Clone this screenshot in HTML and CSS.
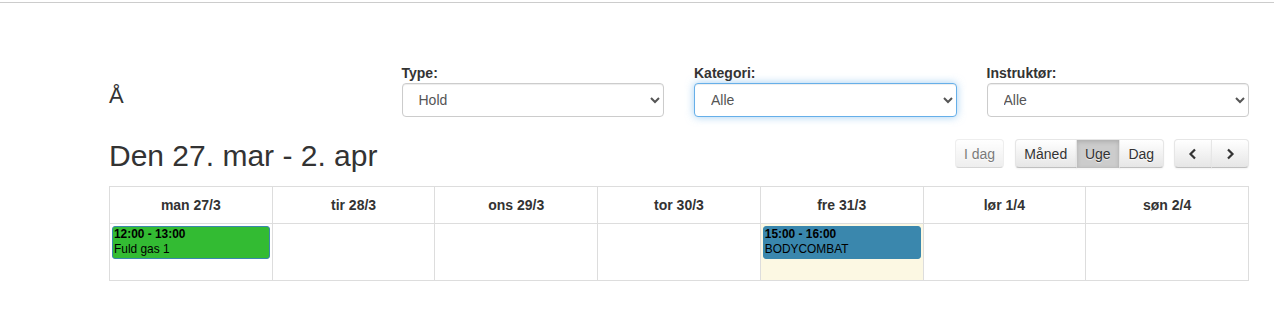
FILE: index.html
```html
<!DOCTYPE html>
<html>
  <head>
    <meta charset="utf-8">
    <title>Holdplan</title>
    <link rel="stylesheet" href="styles.css">
  </head>

<body>
  <div class = "top-line"></div>

  <div class = "page">
    <div class = "filters">
      <div class = "filter-title">Å</div>

      <div class = "form-group">
        <label class = "form-label">Type:</label>
        <select class = "form-control">
          <option>Hold</option>
        </select>
      </div>

      <div class = "form-group">
        <label class = "form-label">Kategori:</label>
        <select class = "form-control is-focus">
          <option>Alle</option>
        </select>
      </div>

      <div class = "form-group">
        <label class = "form-label">Instruktør:</label>
        <select class = "form-control">
          <option>Alle</option>
        </select>
      </div>
    </div>

    <div class = "toolbar">
      <h2 class = "range-title">Den 27. mar - 2. apr</h2>

      <div class = "toolbar-right">
        <button class = "fc-button is-single is-disabled">I dag</button>

        <div class = "btn-group">
          <button class = "fc-button">Måned</button>
          <button class = "fc-button is-active">Uge</button>
          <button class = "fc-button">Dag</button>
        </div>

        <div class = "btn-group">
          <button class = "fc-button arrow-button">
            <svg width="10" height="12" viewBox="0 0 10 12"><polyline points="7,1.5 2.5,6 7,10.5" fill="none" stroke="#333" stroke-width="2.2"/></svg>
          </button>
          <button class = "fc-button arrow-button">
            <svg width="10" height="12" viewBox="0 0 10 12"><polyline points="3,1.5 7.5,6 3,10.5" fill="none" stroke="#333" stroke-width="2.2"/></svg>
          </button>
        </div>
      </div>
    </div>

    <table class = "week-table">
      <thead>
        <tr>
          <th>man 27/3</th>
          <th>tir 28/3</th>
          <th>ons 29/3</th>
          <th>tor 30/3</th>
          <th>fre 31/3</th>
          <th>lør 1/4</th>
          <th>søn 2/4</th>
        </tr>
      </thead>
      <tbody>
        <tr>
          <td>
            <div class = "event event-green">
              <div class = "event-time">12:00 - 13:00</div>
              <div>Fuld gas 1</div>
            </div>
          </td>
          <td></td>
          <td></td>
          <td></td>
          <td class = "today">
            <div class = "event event-blue">
              <div class = "event-time">15:00 - 16:00</div>
              <div>BODYCOMBAT</div>
            </div>
          </td>
          <td></td>
          <td></td>
        </tr>
      </tbody>
    </table>
  </div>
</body>
</html>
```

FILE: styles.css
```css
body {
  margin: 0;
  font-family: "Liberation Sans", Arial, sans-serif;
  font-size: 14px;
  color: #333;
  background-color: #fff;
}

.top-line {
  margin-top: 2px;
  border-top: 1px solid #ccc;
}

.page {
  margin-left: 109px;
  width: 1140px;
}

.filters {
  display: grid;
  grid-template-columns: repeat(4, 1fr);
  column-gap: 30px;
  margin-top: 60px;
}

.filter-title {
  align-self: end;
  font-size: 22px;
  line-height: 34px;
  padding-bottom: 4px;
}

.form-label {
  display: block;
  font-weight: bold;
  line-height: 20px;
  margin-bottom: 0;
}

.form-control {
  display: block;
  width: 100%;
  height: 34px;
  padding: 6px 12px;
  font-family: "Liberation Sans", Arial, sans-serif;
  font-size: 14px;
  color: #555;
  background-color: #fff;
  border: 1px solid #ccc;
  border-radius: 4px;
  box-shadow: inset 0 1px 1px rgba(0, 0, 0, .075);
}

.is-focus {
  border-color: #66afe9;
  box-shadow: inset 0 1px 1px rgba(0, 0, 0, .075), 0 0 8px rgba(102, 175, 233, .6);
}

.toolbar {
  display: flex;
  justify-content: space-between;
  align-items: flex-start;
  margin-top: 22px;
  margin-bottom: 14px;
}

.range-title {
  margin: 0;
  font-size: 30px;
  font-weight: 500;
  line-height: 33px;
}

.toolbar-right {
  display: flex;
}

.btn-group {
  display: flex;
  margin-left: 10.5px;
}

.fc-button {
  height: 29.4px;
  padding: 0 8.4px;
  font-family: "Liberation Sans", Arial, sans-serif;
  font-size: 14px;
  color: #333;
  background-color: #f5f5f5;
  background-image: linear-gradient(to bottom, #fff, #e6e6e6);
  border: 1px solid;
  border-color: #e6e6e6 #e6e6e6 #bfbfbf;
  border-radius: 0;
  text-shadow: 0 1px 1px rgba(255, 255, 255, .75);
  box-shadow: inset 0 1px 0 rgba(255, 255, 255, .2), 0 1px 2px rgba(0, 0, 0, .05);
  margin: 0;
}

.btn-group .fc-button + .fc-button {
  margin-left: -1px;
}

.btn-group .fc-button:first-child {
  border-radius: 4px 0 0 4px;
}

.btn-group .fc-button:last-child {
  border-radius: 0 4px 4px 0;
}

.is-single {
  border-radius: 4px;
}

.is-disabled {
  opacity: .65;
  box-shadow: none;
}

.is-active {
  background-color: #ccc;
  background-image: none;
  box-shadow: inset 0 2px 4px rgba(0, 0, 0, .15), 0 1px 2px rgba(0, 0, 0, .05);
}

.arrow-button {
  width: 38px;
  display: flex;
  align-items: center;
  justify-content: center;
}

.week-table {
  width: 1140px;
  border-collapse: collapse;
  table-layout: fixed;
}

.week-table th {
  border: 1px solid #ddd;
  height: 36px;
  padding: 0;
  font-weight: bold;
  text-align: center;
}

.week-table td {
  border: 1px solid #ddd;
  height: 56px;
  padding: 0;
  vertical-align: top;
}

.today {
  background-color: #fcf8e3;
}

.event {
  margin: 2px 2px 0 2px;
  padding: 0 1px;
  border: 1px solid #3a87ad;
  border-radius: 3px;
  font-size: 11.9px;
  line-height: 1.3;
  color: #000;
}

.event-time {
  font-weight: bold;
}

.event-green {
  background-color: #33bb33;
}

.event-blue {
  background-color: #3a87ad;
}
```
